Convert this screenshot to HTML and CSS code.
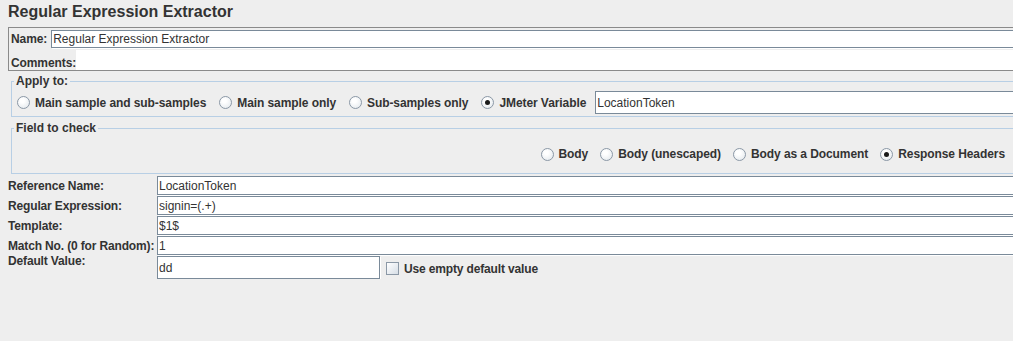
FILE: index.html
```html
<!DOCTYPE html>
<html lang="en">
<head>
  <meta charset="UTF-8">
  <title>Regular Expression Extractor</title>
  <link rel="stylesheet" href="styles.css">
</head>
<body>
  <div class="page">
    <h1 class="title">Regular Expression Extractor</h1>

    <div class="name-panel">
      <div class="name-row">
        <label class="name-label">Name:</label>
        <input class="text-field name-field" value="Regular Expression Extractor">
      </div>
      <div class="comments-row">
        <label class="name-label comments-label">Comments:</label>
        <div class="comments"></div>
      </div>
    </div>

    <fieldset class="group apply-group">
      <legend>Apply to:</legend>
      <div class="apply-row">
        <label class="radio"><span class="radio-icon"></span>Main sample and sub-samples</label>
        <label class="radio"><span class="radio-icon"></span>Main sample only</label>
        <label class="radio"><span class="radio-icon"></span>Sub-samples only</label>
        <label class="radio"><span class="radio-icon checked"></span>JMeter Variable</label>
        <input class="text-field var-field" value="LocationToken">
      </div>
    </fieldset>

    <fieldset class="group check-group">
      <legend>Field to check</legend>
      <div class="check-row">
        <label class="radio"><span class="radio-icon"></span>Body</label>
        <label class="radio"><span class="radio-icon"></span>Body (unescaped)</label>
        <label class="radio"><span class="radio-icon"></span>Body as a Document</label>
        <label class="radio"><span class="radio-icon checked"></span>Response Headers</label>
      </div>
    </fieldset>

    <div class="form">
      <label class="field-label">Reference Name:</label>
      <input class="text-field" value="LocationToken">
      <label class="field-label">Regular Expression:</label>
      <input class="text-field" value="signin=(.+)">
      <label class="field-label">Template:</label>
      <input class="text-field" value="$1$">
      <label class="field-label">Match No. (0 for Random):</label>
      <input class="text-field" value="1">
      <label class="field-label top">Default Value:</label>
      <div class="default-row">
        <input class="text-field default-field" value="dd">
        <label class="check"><span class="check-icon"></span>Use empty default value</label>
      </div>
    </div>
  </div>
</body>
</html>
```

FILE: styles.css
```css
html, body {
  margin: 0;
  padding: 0;
  overflow: hidden;
  background-color: #eeeeee;
}

body {
  font-family: "Liberation Sans", Arial, sans-serif;
  font-size: 12px;
  color: #333;
}

.page {
  width: 1020px;
}

.title {
  margin: 0;
  padding: 2px 0 0 8px;
  font-size: 16px;
  line-height: 20px;
  font-weight: bold;
  color: #333;
}

.text-field {
  box-sizing: border-box;
  height: 19px;
  border: 1px solid #7a8a99;
  background-color: #fff;
  font-family: "Liberation Sans", Arial, sans-serif;
  font-size: 12px;
  color: #333;
  padding: 0 1px;
  margin: 0;
  outline: none;
  box-shadow: 1px 1px 0 #fff;
}

/* name / comments */
.name-panel {
  margin: 5px 0 0 8px;
  border: 1px solid #8a8a8a;
  padding: 2px 0 0 2px;
}
.name-row {
  display: flex;
  align-items: center;
  height: 18px;
}
.name-label {
  font-weight: bold;
  line-height: 14px;
  margin-right: 4px;
  letter-spacing: -0.1px;
}
.name-field {
  flex: 1;
  height: 18px;
}
.comments-row {
  display: flex;
  align-items: flex-end;
  height: 20px;
  margin-top: 2px;
}
.comments-label {
  margin-right: 0;
}
.comments {
  flex: 1;
  height: 20px;
  background-color: #fff;
}

/* groups */
.group {
  margin: 3px 0 0 11px;
  padding: 0 2px;
  border: 1px solid #b8cfe5;
  min-width: 0;
}
.group legend {
  padding: 0 2px;
  font-weight: bold;
  line-height: 14px;
}
.check-group {
  margin-top: 4px;
}

.apply-row {
  display: flex;
  align-items: center;
  gap: 13px;
  padding: 3px 0 2px 3px;
}
.var-field {
  flex: 1;
  height: 23px;
  margin-left: -4px;
  box-shadow: none;
}

.check-row {
  display: flex;
  justify-content: flex-end;
  align-items: center;
  gap: 12px;
  height: 20px;
  padding: 9px 12px 9px 0;
}

.radio {
  display: flex;
  align-items: center;
  gap: 5px;
  font-weight: bold;
  line-height: 14px;
  white-space: nowrap;
  letter-spacing: -0.08px;
}
.radio-icon {
  position: relative;
  box-sizing: border-box;
  width: 13px;
  height: 13px;
  border: 1px solid #8b98a6;
  border-radius: 50%;
  background: radial-gradient(circle at 40% 35%, #ffffff 20%, #dfe5ea 100%);
}
.radio-icon.checked::after {
  content: "";
  position: absolute;
  left: 3px;
  top: 3px;
  width: 5px;
  height: 5px;
  border-radius: 50%;
  background-color: #1a1a1a;
}

/* fields */
.form {
  display: grid;
  grid-template-columns: 149px 1fr;
  row-gap: 1px;
  margin: 2px 0 0 8px;
}
.field-label {
  align-self: center;
  font-weight: bold;
  line-height: 14px;
  white-space: nowrap;
  letter-spacing: -0.15px;
}
.field-label.top {
  align-self: start;
  margin-top: -2px;
}
.default-row {
  display: flex;
  align-items: center;
  gap: 6px;
}
.default-field {
  width: 223px;
  height: 23px;
}
.check {
  display: flex;
  align-items: center;
  gap: 5px;
  font-weight: bold;
  line-height: 14px;
  margin-top: 2px;
  letter-spacing: -0.15px;
}
.check-icon {
  box-sizing: border-box;
  width: 13px;
  height: 13px;
  border: 1px solid #8b98a6;
  background: linear-gradient(135deg, #ffffff 0%, #d6dee6 100%);
}
```
